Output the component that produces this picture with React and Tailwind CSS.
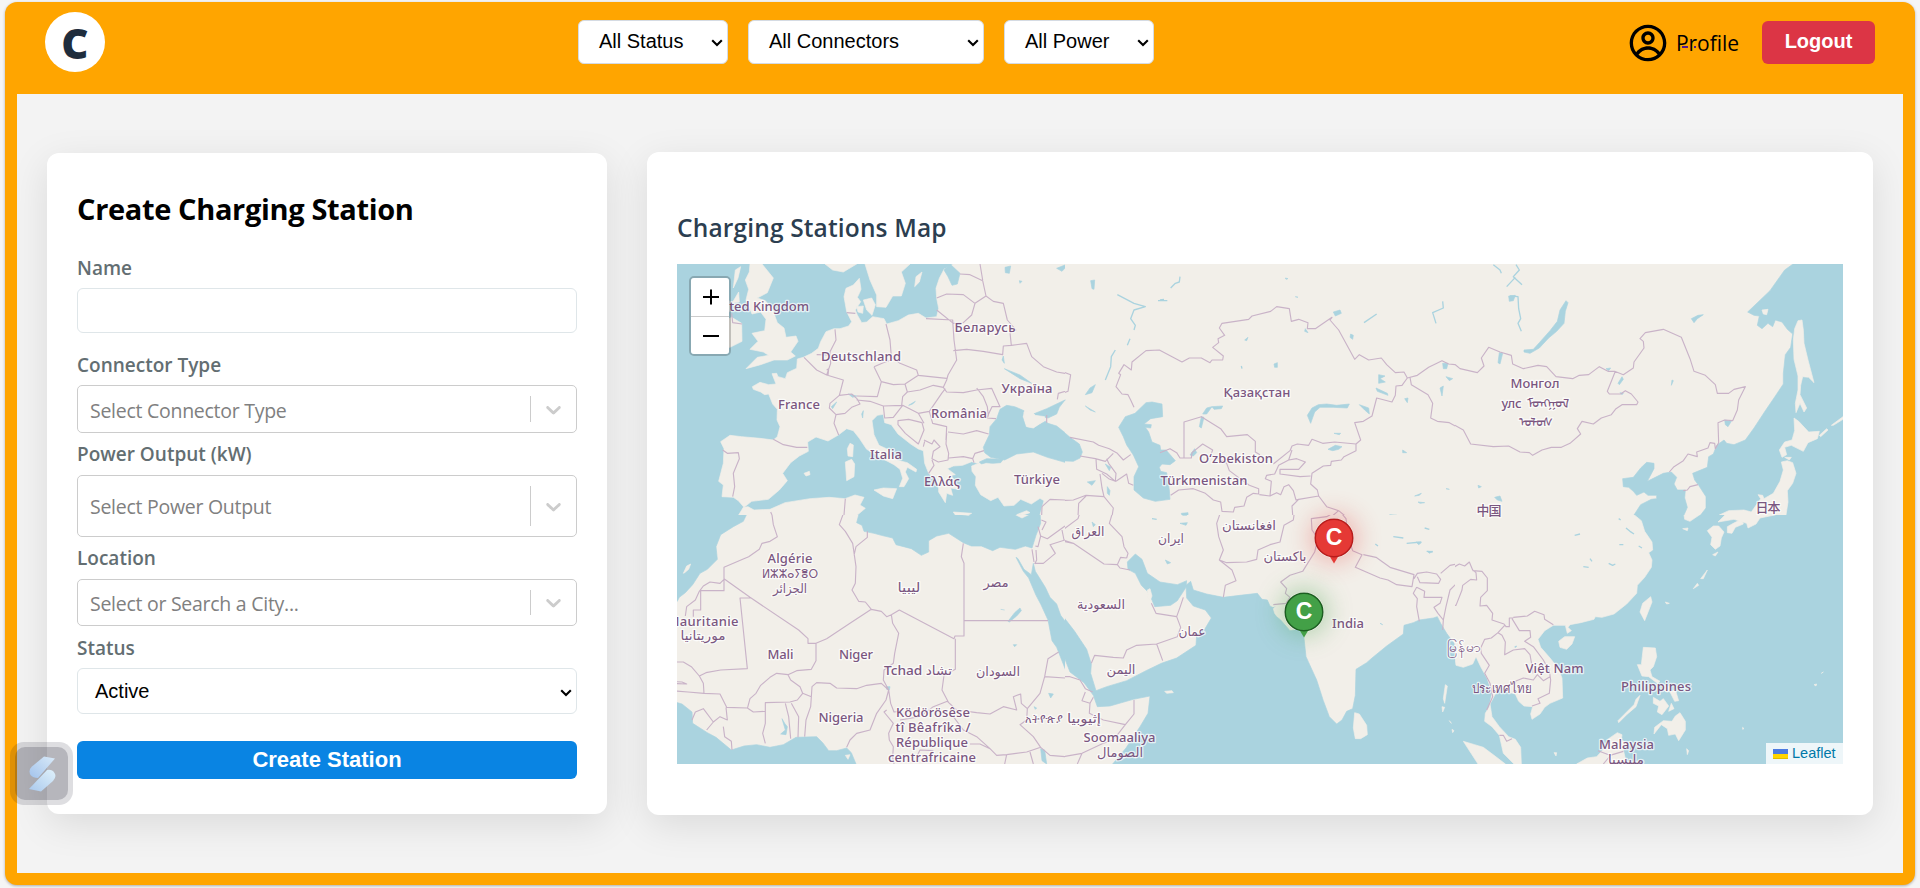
import React from "react";
import { CgProfile } from "react-icons/cg";

function Caret({ className = "" }) {
  return (
    <svg className={"h-[8px] w-[12px] shrink-0 " + className} viewBox="0 0 12 8" fill="none">
      <path d="M1.2 1.3 6 6.1l4.8-4.8" stroke="currentColor" strokeWidth="2.1" />
    </svg>
  );
}

function Filter({ label, width }) {
  return (
    <button
      className={
        "flex h-[44px] items-center justify-between rounded-[6px] border border-[#d5dbe3] bg-white pl-[20px] pr-[4px] font-['Liberation_Sans',sans-serif] text-[20px] text-black " +
        width
      }
    >
      <span className="-mt-[2px]">{label}</span>
      <Caret className="mt-[2px]" />
    </button>
  );
}

function Label({ children, className }) {
  return (
    <div className={"text-[19px] font-semibold leading-[26px] text-[#636e72] " + className}>{children}</div>
  );
}

function Picker({ text, height, spacing }) {
  return (
    <div className={"flex shrink-0 items-stretch rounded-[5px] border border-[#ccc] bg-white pl-[12px] text-[19.5px] text-[#808080] " + height}>
      <span className={"grow self-center pt-[3px] leading-[26px] " + spacing}>{text}</span>
      <span className="my-[10px] w-px bg-[#ccc]" />
      <span className="flex w-[45px] items-center justify-center">
        <svg className="h-[25px] w-[25px]" viewBox="0 0 20 20" fill="#ccc">
          <path d="M4.516 7.548c0.436-0.446 1.043-0.481 1.576 0l3.908 3.747 3.908-3.747c0.533-0.481 1.141-0.446 1.574 0 0.436 0.445 0.408 1.197 0 1.615-0.406 0.418-4.695 4.502-4.695 4.502-0.217 0.223-0.502 0.335-0.787 0.335s-0.57-0.112-0.789-0.335c0 0-4.287-4.084-4.695-4.502s-0.436-1.17 0-1.615z" />
        </svg>
      </span>
    </div>
  );
}

const LAND = "#f2efe9";
const WATER = "#aad3df";
const BORDER = "#c9b3c8";

const tiles = [
  {
    x: 0, y: 0, w: 388, h: 251, vb: "21 12 1164 753", base: WATER,
    land: [
      "M850 12 822 28 808 55 798 85 800 115 806 145 800 170 768 174 745 160 715 165 685 182 650 192 642 176 608 170 590 186 575 188 562 165 556 150 572 125 562 112 568 100 573 88 568 55 550 75 528 85 522 110 530 155 545 185 536 198 510 206 492 206 468 215 452 245 445 265 425 280 400 292 382 297 380 325 352 338 346 356 324 350 320 340 306 341 318 372 296 374 270 367 247 380 250 388 272 396 284 404 296 402 308 432 322 448 321 480 330 500 322 530 310 540 270 535 215 530 180 526 152 545 162 566 160 610 146 664 160 675 156 710 190 712 205 722 222 742 245 724 295 718 328 690 352 662 338 640 362 608 388 588 415 574 413 546 438 531 474 543 505 525 530 506 550 512 568 535 590 568 620 585 645 600 672 614 690 628 698 655 688 680 702 680 716 656 706 636 712 622 738 636 740 628 712 608 680 600 662 572 627 556 612 524 606 482 622 466 640 463 644 488 664 494 684 522 722 552 745 567 760 572 764 610 776 640 792 655 806 676 806 696 826 728 830 700 848 706 842 684 866 688 852 660 842 646 856 644 832 626 850 618 878 616 905 605 922 610 940 606 962 596 905 618 906 634 918 650 916 676 932 704 962 722 984 712 1002 738 1032 736 1052 718 1084 732 1110 715 1122 722 1110 765H1185V12Z",
      "M206 765 220 742 234 740 252 750 300 748 345 728 420 716 478 712 525 716 555 705 582 712 570 735 586 745 562 765Z",
      "M240 12H276L310 54 292 98 262 114 286 122 308 150 322 188 342 204 348 232 378 228 384 244 362 276 376 288 352 300 312 300 272 314 228 326 262 292 296 286 280 276 240 268 264 244 246 220 284 212 288 178 272 156 246 162 228 120 236 88 226 60 238 36Z",
      "M150 190 185 172 215 190 216 244 180 262 150 262Z",
      "M465 12 488 30 520 36 560 12Z",
      "M585 12 600 60 620 105 620 140 648 142 668 108 694 108 706 70 694 36 720 12Z",
      "M734 80 738 50 756 36 748 66Z",
      "M580 120 605 114 616 134 606 166 590 150Z M560 140 580 138 578 160 564 156Z",
      "M540 550 550 555 548 590 534 588 532 566Z M545 598 554 612 552 650 530 662 526 606Z",
      "M612 690 640 684 680 686 668 716 640 708Z M402 640 418 634 420 644 408 648Z M850 756 905 760 890 768 856 765Z M1040 764 1070 752 1080 758 1060 765Z",
      "M196 30 212 20 204 54 190 84Z M186 130 206 96 208 126Z",
    ],
    water: [
      "M840 12 870 40 862 72 846 76 834 50 822 30Z",
      "M990 448 1010 436 1034 440 1062 452 1058 470 1068 500 1090 504 1126 484 1134 490 1160 498 1185 518V607L1132 592 1090 576 1040 582 1004 600 962 592 944 578 940 562 958 524 960 500 980 476Z",
      "M1090 462 1130 446 1185 420 1168 442 1160 462 1134 474 1118 470 1096 468Z",
      "M950 596 1000 598 992 608 968 610 948 608 934 612 928 606Z",
      "M1005 22 1022 18 1018 40 1006 38Z M1000 288 1003 310 996 300Z M1003 326 1050 345 1085 370 1050 356Z M575 462 580 452 578 474Z M716 436 736 424 728 432Z M484 440 500 426 488 446Z M535 402 560 408 548 412Z M1048 62 1056 64 1050 70Z",
      "M1160 25 1185 15 1185 24 1176 34Z",
    ],
    over: ["M1062 456 1082 452 1096 466 1124 470 1122 482 1090 504 1070 500 1062 474Z"],
    lines:
      "M870 42 900 44 938 62 948 108 915 130 880 104 830 102 800 114M930 12 938 60M948 108 970 124 1000 130 1012 180 1038 210 1020 218 1024 256 1000 258 998 284 940 274 890 268 850 272M915 130 905 165 880 188 850 190 800 150M768 176 848 180 852 240 860 300 834 345 830 360 820 382M648 192 660 240 664 290 690 310 740 330 745 346 830 355M612 320 640 308 664 300M612 320 634 365 670 374 705 372 745 346M705 372 712 396 750 390 790 376 820 382 830 396 880 398 920 390 965 385 990 440 966 440 950 474 978 476M920 384 940 410 952 440 955 470M1024 256 1070 250 1085 290 1120 320 1160 336 1196 342 1198 390 1165 400 1162 418M495 208 498 240 480 275 482 310 470 345 440 330 402 292M440 284 480 285M470 345 520 360 508 406 480 430 478 444 498 464 525 460 545 442 570 432 560 415 545 402 508 406M560 408 622 410 634 365M560 420 600 424 640 438 695 436 698 410 712 396M640 438 644 474 670 472 698 436 745 460 778 454 815 400 826 386M684 482 716 478 756 488 762 510 745 552 706 520 684 494ZM745 460 762 490M778 454 788 490 830 500 828 540M762 540 786 552 792 540 810 560 790 574 786 596 805 606 834 600 836 580 828 552 830 520M834 516 880 522 920 512 956 522M836 594 880 590 908 596 915 580 942 572M786 600 792 616 776 640M760 560 764 544M498 464 492 490 506 525M310 538 340 554 380 562 412 562M158 570 172 580 205 578 208 596 190 640 194 680 188 710M185 160 188 188 216 192M530 158 556 160M526 716 522 765M306 765 302 756M1130 465V488M1116 740 1140 718 1185 720M1115 765 1116 740M908 596 912 608M474 346 476 326 470 330",
  },
  {
    x: 388, y: 0, w: 390, h: 251, vb: "15 12 1170 753", base: LAND,
    land: [], over: [],
    water: [
      "M258 428 276 426 306 432 308 470 272 476 252 492 274 494 272 504 256 502 266 516 276 546 300 556 302 570 318 570 332 586 346 602 330 614 306 612 298 622 302 634 320 638 328 690 330 718 286 724 250 714 222 690 222 650 236 620 220 585 200 555 190 530 176 502 196 470 225 460Z",
      "M0 506 30 532 58 552 67 576 60 594 40 604 0 602Z",
      "M752 490 742 466 756 444 775 434 800 432 830 436 868 432 862 444 820 442 780 442 764 456Z",
      "M804 568 826 556 846 560 836 568 818 572Z M390 585 404 566 410 578 400 588Z M418 500 424 470 432 472 424 504Z M428 462 440 444 456 440 440 462Z M456 440 488 438 484 446 462 448Z",
      "M898 434 926 444 928 462 914 450Z M948 384 982 400 984 406 952 394Z M956 344 975 348 960 356 976 366 956 370Z M822 520 842 520 838 524Z M642 312 652 308 652 322 644 322Z M736 206 744 218 734 214Z M1148 310 1164 310 1160 326 1150 326Z M1158 350 1178 356 1168 362Z M1140 384 1150 378 1146 408Z M1034 416 1044 414 1042 428Z M1028 570 1040 578 1028 578Z",
      "M820 156 840 150 844 160 826 168Z M872 222 880 226 878 238 870 232Z M554 240 564 232 560 242Z M82 666 106 662 96 676Z M142 680 150 692 148 706 142 700Z M364 760 384 758 384 766 366 766Z M136 612 152 622 148 632Z M76 404 90 384 106 374 96 398Z M76 438 106 456 90 450Z M0 422 16 420 4 428Z M0 12 8 20 0 32Z M92 62 104 60 102 88 96 86Z",
      "M1064 708 1084 700 1078 706Z M1074 726 1094 728 1080 730Z M1158 686 1168 688Z M984 768 1010 766 990 764Z M676 54 684 56 678 58Z M706 110 714 112Z",
    ],
    rivers:
      "M172 104 222 130 256 140 222 150 212 176 226 196 222 210M210 236 202 256M166 270 154 290 152 320 136 360M294 122 322 122M332 84 346 70 358 66 360 50M912 188 950 162M1148 124 1150 144 1118 158 1128 190M544 318 546 326M300 120 312 118",
    lines:
      "M0 332 32 344 24 394 0 402M222 442 212 420 204 404 186 402 168 380 182 344 176 340 192 314 214 330 216 306 258 272 298 270 366 306 388 294 424 294 450 308 456 300 488 300 490 288 458 262 476 248 474 236 494 226 478 204 486 190 566 178 576 168 632 154 650 140 688 146 694 184 716 178 744 188 742 206 766 206 816 172 810 180 836 210 884 298 898 284 926 300 964 294 980 314 1006 338 1032 336 1042 354 1072 346 1106 322 1146 302 1166 312 1185 314M1042 354 1026 376 1008 378 1006 406 996 426 950 414 936 468 910 484 884 488 902 540 888 552 824 546 788 550 756 538 746 556 712 552 696 558 690 572 640 612M1050 352 1054 374 1104 404 1118 430 1112 474 1132 484 1168 488 1200 506M372 594V486L424 470 482 506 500 530 562 524 586 544V576L600 584M372 594H394L396 578 428 552 458 570 452 586 476 596 500 610 508 632 540 656 568 676 596 686V702L580 700 560 712 552 738 524 742 520 756 486 754 482 726 460 720 436 700 400 686 356 690 332 706M300 578 330 566 350 578 360 594 372 594M888 552V572L852 590 844 600 814 604 812 616 790 618 756 640 752 672 772 690 776 708 716 718 696 738 698 765M752 648 720 650 660 642 660 628 688 628 716 628 736 606 710 596 686 600 696 570M686 600 656 616 644 642 620 646 616 656 634 664 630 708 598 704M630 708 650 698 662 704 672 680 686 674 700 692 708 720 716 718M776 708 800 740 836 752 858 770M836 752 812 772 756 778M30 532 100 546 116 556 148 566 172 580 190 600 212 584M60 588 106 596 136 604 160 580M108 598 110 628 140 642 166 664 168 640 146 610 140 596M168 664 200 642 206 670 220 676M120 642 126 684 132 710 78 706 40 720 0 722M132 710 160 744 156 770M78 708 56 730 54 770M126 640 146 656 166 664",
  },
  {
    x: 778, y: 0, w: 388, h: 251, vb: "15 12 1164 753", base: LAND,
    water: [
      "M1029 12 1004 30 960 92 893 156 912 166 928 168 922 196 936 206 954 190 968 200 976 180 996 186 1012 208 1028 222 1022 262 1006 284 1000 340 1000 372 972 414 946 452 912 504 886 540 852 554 830 550 822 540 800 556 790 582 776 590 772 622 728 640 734 660 746 676 768 710 768 744 752 765H1179V12Z",
      "M590 607 612 610 612 626 592 664 640 640 664 636 680 652 672 672 682 690 706 690 704 714 712 742 702 765H552L572 734 604 718 620 716 620 706 594 706 582 696 560 706 550 694 536 682 520 680 518 656 550 652 572 624Z",
      "M348 122 354 128 346 154 342 190 320 214 296 234 268 264 240 280 222 276 222 270 250 268 268 248 300 212 322 184 330 150Z",
      "M148 278 158 280 150 312 144 308Z M504 370 516 350 520 358 508 374Z M724 176 744 166 760 164 742 176 732 188Z M824 480 844 484 834 500 826 494Z M134 712 150 708 156 724 142 720Z M84 676 94 680 86 684Z M468 326 482 324 476 332Z M176 108 196 106 190 122 178 124Z M510 398 520 400 516 404Z M666 360 670 362 664 376Z",
    ],
    land: [],
    over: [
      "M1044 182 1056 180 1060 210 1062 250 1074 300 1092 368 1076 352 1058 350 1052 376 1050 404 1070 444 1062 456 1050 430 1038 458 1036 430 1044 390 1044 348 1032 298 1030 240 1034 206Z",
      "M1032 474 1046 484 1076 516 1108 514 1102 536 1074 548 1060 574 1024 556 1004 562 1010 584 996 592 988 570 1004 546 1026 540 1034 512Z M1108 526 1130 506 1134 510 1112 530ZM1144 496 1179 470V478L1150 496Z",
      "M994 606 1012 602 1028 608 1038 640 1028 670 1012 692 1014 726 1008 765H808L836 752 882 750 904 756 932 716 924 704 938 706 942 716 970 700 990 664 1000 630Z",
      "M1004 592 1024 592 1018 600Z M936 150 954 148 950 164 940 162Z",
    ],
    rivers: "M130 14 150 30 154 40M198 14 208 30 190 50 216 74M170 80 196 52M180 108 204 110 206 146 212 176 204 190 214 214",
    lines:
      "M0 314 16 314 30 326 82 338 102 318 94 294 116 262 150 276 184 286 188 312 220 326 264 316 290 320 318 350 368 356 388 346 416 344 448 320 474 334 494 334 520 344 550 324 552 306 582 264 580 244 570 236 586 218 640 208 694 232 720 296 732 334 766 346 796 374 802 400 836 400 852 388 886 380 866 420 862 450 848 482 824 480 804 488 806 548 796 566 794 550 780 548 774 564 740 576 742 590 714 582 700 602 672 620 658 636M496 334 472 394 478 402 512 402 526 392 544 402 564 426 560 434 516 434 498 446 484 464 454 474 430 492 396 484 382 506 392 522 360 550 334 562 304 562 276 570 248 586 238 578 210 576 176 558 130 560 62 552 40 510 0 488M700 692 712 690 720 680 744 674",
  },
  {
    x: 0, y: 251, w: 388, h: 249, vb: "21 15 1164 747", base: LAND,
    water: [
      "M0 0H236L220 34 190 50 152 74 138 110 142 148 112 178 90 190 68 224 46 248 28 262 21 275H0Z",
      "M236 0 240 10 290 12 305 0Z",
      "M570 0 560 38 576 46 582 64 612 70 634 76 668 84 678 104 724 116 754 136 776 126 776 92 800 78 836 70 880 98 904 108 934 108 968 122 990 112 1036 118 1066 108 1086 114 1098 76 1112 40 1110 0Z",
      "M1038 142 1044 146 1062 178 1084 194 1090 160 1096 184 1126 232 1140 262 1160 282 1172 316 1190 340V488L1160 412 1146 392 1134 330 1112 282 1098 256 1076 204 1060 184Z",
      "M0 572 36 582 66 606 68 640 112 668 138 682 184 720 222 708 260 704 300 712 340 704 378 682 440 680 458 698 476 722 500 722 530 714 544 728 558 762H0Z",
      "M336 626 344 640 352 650 348 674 332 672 346 660ZM1112 716 1124 720 1130 762 1116 752ZM1136 550 1150 552 1142 564ZM1014 334 1034 308 1050 294 1054 302 1040 318 1018 336ZM992 298 1004 300M1030 404 1040 404 1034 410ZM650 530 660 530 658 540 650 538ZM1092 590 1100 594 1096 598Z",
    ],
    land: [],
    over: ["M40 190 50 168 62 162 56 178 44 188Z M850 6 880 6 908 8 896 16 860 12Z M1036 14 1060 8 1080 12 1056 24Z M526 736 540 734 534 748Z"],
    lines:
      "M304 0 310 44 322 80 300 94 276 100 268 118 236 140 218 148 162 172V242H92V300H70V320M162 208 150 220 120 216 100 228 88 244 76 270 50 290 46 318M162 206 240 262 386 360 414 386V400H438L470 386 540 340 604 298 586 276 566 274 546 240 556 220 558 170 548 100 526 64 508 44 524 0M592 64 592 82 558 110 552 136M604 298 634 304 650 320 664 314 688 300 852 386 855 378H882V160L874 140 880 100M882 332H1134M856 386V478L822 496 816 540 836 578M664 314 668 340 686 370 674 430 670 460 642 480 640 510 656 540M438 400V452L424 478 380 482 354 494 320 490 300 502 272 526 258 550 240 566 232 596 M244 264H210L232 476 152 480 108 488 88 498 64 470 40 456 0 456M88 498 100 520 102 550 54 546 0 542M0 520 50 522 36 516 0 514M102 550 150 552 170 592 232 594 250 606 286 604M286 700 278 670 286 640 286 578 360 576 382 570 398 550 390 530 362 510 354 494M398 550 424 560 426 530 440 518 480 520 500 534 560 536 590 526 634 520 656 540 648 570 620 610 600 660 560 670 540 690 530 712M424 560 422 590 408 630 404 680M364 580 386 620 384 682M346 580 356 620 362 686M168 592 172 630 150 620 130 636 100 596 76 606 66 630M130 636 110 660M160 650 164 680 184 694 186 720M656 540 662 580 672 606 690 604M650 600 642 606 670 640 656 670 658 690 670 710 668 740 672 762M690 630 750 620 790 590 832 574 860 600 920 608 960 612 1000 590 1040 600 1030 560 1052 552 1054 580 1072 596 1070 630 1050 644 1090 680 1112 712 1070 726 1010 734 980 736 960 716 930 702 900 702M850 620 880 660 920 680 960 716M1072 596 1110 550 1124 500 1134 446 1166 426M1124 500 1185 504M1112 712 1140 736 1185 740M1010 734 1004 762M1080 726 1090 762M1098 120 1100 150 1094 162M1086 118 1092 156M1104 50 1112 78 1104 110 1096 108M1112 78 1132 86 1185 48M1114 30 1128 36 1116 60M1094 160 1120 160 1156 130 1140 104 1185 90M1176 60 1182 90M740 740 750 720 790 722",
  },
  {
    x: 388, y: 251, w: 390, h: 249, vb: "15 15 1170 747", base: LAND,
    water: [
      "M378 226 392 214 400 240 440 252 490 262 540 256 592 250 606 268 622 270 630 288 652 300 650 320 662 330 690 362 716 358 730 366 738 440 770 510 790 572 808 620 830 642 846 630 860 604 878 596 886 556 888 478 920 458 936 444 980 408 1030 372 1032 346 1060 338 1078 330 1120 324 1132 320 1142 340 1160 370 1182 400 1188 460 1200 470V762H158L198 714 240 650 264 610 270 558 220 568 150 588 112 590 100 556 72 518 30 486 0 410V290L10 320 44 364 80 418 94 462 92 490 108 542 140 530 200 512 258 482 304 460 350 444 408 406 410 374 434 358 454 324 436 300 400 288 380 264Z",
      "M202 156 226 132 246 148 262 190 300 216 352 224 380 212 378 232 352 272 332 286 284 290 276 270 262 244 244 226 226 190 204 178Z",
      "M636 294 670 282 678 290 660 300ZM96 36 106 44 100 50ZM316 150 332 158 322 162ZM366 8 384 10 380 16 368 16ZM360 40 382 38 378 46ZM1068 96 1084 98 1076 104ZM1102 124 1118 124 1108 130ZM960 340 968 344Z",
    ],
    land: [],
    over: [
      "M884 608 898 612 920 646 922 674 902 686 886 686 880 654Z M262 240 270 236 276 258 270 272 264 262Z M314 544 336 542 340 548 320 550Z M1156 524 1162 528 1154 580 1150 566Z M1146 590 1154 592 1148 606Z M1168 632 1174 640ZM1176 658 1182 662 1178 668Z",
      "M644 310 640 296 654 282 676 282 682 330 650 318Z",
    ],
    rivers: "M946 102 954 108M1000 80 1030 84M1040 100 1084 96M1094 54 1108 58M1100 124 1118 126M276 26 290 28M360 12 384 12",
    lines:
      "M62 0 54 26 0 66 10 90 40 100 132 162 172 164 182 142 200 144M172 164 180 174 210 180M160 0 148 40 186 80 192 110 204 130 200 144M0 92 40 100M484 0 470 40 476 80 490 120 478 150 516 180 528 212 496 226 490 262M478 150 500 158 560 156 590 148 594 120 630 104 660 96 672 46 700 30 704 0M836 0 800 20 754 26 756 60 774 86 764 126 728 184 690 196 662 216 680 236 676 250 690 262 678 280 640 284M836 0 858 26 864 80 878 122 906 134 886 172 960 204 984 210 1010 224 1056 230 1062 194 990 172 948 142 910 134M1062 206 1072 190 1100 186 1130 192 1142 208 1136 220 1080 218 1072 200M1070 232 1060 250 1072 266 1070 290 1078 334M1070 232 1094 244 1092 262 1146 262 1140 280 1122 292 1134 310 1150 330 1148 360M1142 190 1170 166 1200 160M1200 210 1170 240 1158 290 1150 330M274 280 288 310 350 320 360 292 370 262M350 320 362 352 352 380 290 402 308 452M290 402 230 406 200 420 190 444 160 442 104 436 94 460M0 500 30 500 60 510 76 536 98 546M76 546 66 572 90 580 88 610 130 630 196 644 222 612V570M196 644 160 690 130 700 66 730 0 742M66 730 52 762M90 580 100 562",
  },
  {
    x: 778, y: 251, w: 388, h: 249, vb: "15 15 1164 747", base: WATER,
    water: [],
    land: [
      "M0 0H556L552 14 574 32 584 64 606 96 608 120 596 128 606 150 604 172 584 202 562 226 560 250 530 282 492 312 456 322 436 320 432 328 392 338 360 344 354 352 364 362 352 370 346 346 310 346 284 362 264 388 272 412 300 444 324 474 336 504 338 564 300 580 284 592 270 612 246 628 242 612 248 590 222 588 206 574 196 552 172 546 150 528 134 556 120 582 126 620 148 650 176 680 196 688 212 712 214 762H192L160 730 148 676 126 650 104 634 106 610 118 590 126 550 112 506 92 470 78 440 68 462 40 472 18 466 12 420 0 400Z",
      "M40 694 74 704 100 712 140 742 166 762H84Z",
      "M380 762 412 744 440 740 466 712 476 686 502 668 516 674 514 690 534 700 520 720 530 762Z",
      "M326 394 344 380 374 380 366 402 350 418 330 412Z M602 260 606 276 584 332 570 306 578 280Z",
      "M580 412 616 414 620 440 610 470 600 480 606 500 630 514 622 520 596 500 576 498 562 464 574 464Z",
      "M690 608 706 634 706 660 686 692 676 672 656 676 652 656 634 644 612 672 614 652 640 632 666 634 676 618Z",
      "M610 562 630 574 640 566 656 588 636 614 622 606 626 588 610 580Z M636 524 658 530 654 546 640 540Z M660 546 676 540 686 572 674 574Z M664 580 672 596 656 604Z",
      "M570 556 558 590 530 614 506 638 504 632 530 606 552 584 558 568Z M700 0H770L720 34 704 28Z M698 56 714 54 712 62Z",
      "M772 62 790 48 806 48 822 66 814 84 810 108 796 118 782 104 786 82Z M832 50 850 40 874 28 880 42 856 52 846 70 832 68Z M804 36 826 14 840 0H1010L970 16 930 24 918 42 894 54 890 40 852 28Z",
      "M788 134 804 126 796 138Z M730 236 742 220 746 226ZM752 206 772 180 760 206Z M646 276 658 280 650 282Z M312 728 320 728 318 738Z M4 656 12 664 8 670Z M878 652 882 656 878 658Z M1092 524 1100 522 1098 528Z M1114 490 1120 486ZM710 716 716 722 712 734Z",
    ],
    over: [],
    rivers: "M506 26 512 30M528 54 540 64 552 72M508 104 520 104M566 108 576 114M476 160 488 166 496 162M400 170 416 172M420 146 426 154M374 76 390 72M194 412 200 408",
    lines:
      "M0 178 28 162 44 168 58 156 68 180 78 188 80 210 62 208 38 226 36 240 18 286 0 288M68 182 96 184 112 204V242L92 262 90 288 110 286 128 310 126 330 162 342 168 350 178 350 178 324 190 324M190 322 232 318 254 304 282 314 284 328 310 344M186 326 208 362 240 362 242 382 224 394 250 410 280 450 298 482 302 510 298 550 264 566 270 580 246 588M164 346 144 368 156 376 166 396 164 434 190 420 224 416 240 434 250 490M144 368 124 384 104 388 92 414 94 430 118 466 104 490 120 520 128 560 110 600M196 514 220 504 250 510 262 494 280 512 300 500M196 514 190 546M148 676 160 676 170 694 186 686M444 722 480 736 520 724M460 762 480 738",
  },
];

const labels = [
  ["United Kingdom", 758.5, 311, 101],
  ["Беларусь", 985, 332, 61], ["Deutschland", 861, 361, 80], ["Україна", 1027, 393, 51],
  ["France", 799, 409, 42], ["România", 959, 418, 56], ["Italia", 886, 459, 32],
  ["Ελλάς", 942, 486, 36], ["Türkiye", 1037, 484, 46], ["Қазақстан", 1257, 397, 67],
  ["O‘zbekiston", 1236, 463, 74], ["Türkmenistan", 1204, 485, 87],
  ["Монгол", 1535, 388, 49], ["улс", 1511.5, 408, 20], ["ᠮᠣᠩᠭᠣᠯ", 1548, 408, 42], ["ᠤᠯᠤᠰ", 1535.5, 427, 34],
  ["中国", 1489, 515, 25], ["日本", 1768, 512, 25],
  ["Algérie", 790, 563, 45], ["ⵍⵣⵣⴰⵢⴻⵔ", 790, 578, 56], ["الجزائر", 790, 593, 34],
  ["ليبيا", 909, 592, 23], ["مصر", 996, 587, 25],
  ["Mauritanie", 703, 626, 71], ["موريتانيا", 703, 640, 45],
  ["Mali", 780.5, 659, 26], ["Niger", 856, 659, 34], ["Tchad تشاد", 918, 675, 68],
  ["السودان", 998, 676, 44], ["Nigeria", 841, 722, 45],
  ["Ködörösêse", 933, 717, 74], ["tî Bêafrîka /", 933, 732, 75], ["République", 932, 747, 72], ["centrafricaine", 932, 761.5, 88],
  ["العراق", 1088, 536, 33], ["ايران", 1171, 543, 26], ["افغانستان", 1249, 530, 54], ["باكستان", 1285, 561, 43],
  ["السعودية", 1101, 609, 48], ["عمان", 1192, 636, 27], ["اليمن", 1121, 674, 29],
  ["አትዮጵያ", 1044, 723, 38], ["إثيوبيا", 1084, 723, 34],
  ["Soomaaliya", 1119.5, 742, 72], ["الصومال", 1120, 757, 46], ["India", 1348, 628, 32],
  ["မြန်မာ", 1464, 652, 34], ["Việt Nam", 1554.5, 673, 58], ["ประเทศไทย", 1502, 693, 60],
  ["Philippines", 1656, 691, 70], ["Malaysia", 1626.5, 749, 55], ["مليسيا", 1626, 764, 36],
];

function WorldMap() {
  return (
    <svg className="block h-[500px] w-[1166px]" viewBox="0 0 1166 500">
      {tiles.map((t, i) => (
        <svg key={i} x={t.x} y={t.y} width={t.w} height={t.h} viewBox={t.vb} overflow="hidden">
          <rect x="0" y="0" width="1300" height="800" fill={t.base} />
          <g strokeLinejoin="round" strokeWidth="2">
            <path d={t.land.join("")} fill={LAND} stroke={LAND} />
            <path d={t.water.join("")} fill={WATER} stroke={WATER} />
            <path d={t.over.join("")} fill={LAND} stroke={LAND} />
          </g>
          {t.rivers && <path d={t.rivers} fill="none" stroke={WATER} strokeWidth="4" strokeLinejoin="round" />}
          <path d={t.lines} fill="none" stroke={BORDER} strokeWidth="3.4" strokeLinejoin="round" />
        </svg>
      ))}
      <g
        fontFamily="'Noto Sans','Noto Sans CJK SC','DejaVu Sans',sans-serif"
        fontSize="13"
        fontWeight="500"
        fill="#7a5680"
        stroke="#fff"
        strokeOpacity="0.7"
        strokeWidth="2.6"
        strokeLinejoin="round"
        style={{ paintOrder: "stroke" }}
      >
        {labels.map(([text, x, y, w], i) => (
          <text
            key={i}
            x={x - 677}
            y={y - 264}
            textAnchor="middle"
            textLength={w}
            lengthAdjust={/[\u0600-\u06ff\u0e00-\u139f\u1800-\u18af\u2d30-\u2d7f]/.test(text) ? "spacingAndGlyphs" : "spacing"}
          >
            {text}
          </text>
        ))}
      </g>
    </svg>
  );
}

function Pin({ place, fill, edge, glow }) {
  return (
    <div className={"absolute h-[46px] w-[40px] " + place}>
      <div className={"absolute left-0 top-0 h-[40px] w-[40px] rounded-full " + glow} />
      <svg className="absolute left-0 top-0 h-[46px] w-[40px]" viewBox="0 0 40 46">
        <path d="M15.500 38h9L20 45.500Z" fill={fill} />
        <circle cx="20" cy="20" r="18.800" fill={fill} stroke={edge} strokeWidth="1.500" />
      </svg>
      <span className="absolute left-0 top-0 w-[40px] text-center font-['Liberation_Sans',sans-serif] text-[23px] font-bold leading-[39px] text-white">
        C
      </span>
    </div>
  );
}

export default function App() {
  return (
    <div className="relative h-[888px] w-[1920px] overflow-hidden bg-[#f5f5f5] pl-[5px] pt-[2px] font-['Open_Sans','Noto_Sans',sans-serif]">
      <div className="flex h-[883px] w-[1910px] flex-col rounded-[12px] bg-[#ffa500] pb-[12px] pl-[12px] pr-[12px] shadow-[0_1px_3px_rgba(0,0,0,0.3)]">
        <header className="grid h-[92px] shrink-0 grid-cols-[533px_1fr_auto] items-start pl-[28px] pr-[28px] pt-[10px]">
          <div className="flex h-[60px] w-[60px] justify-center rounded-full bg-white text-[42px] font-extrabold leading-[62px] text-[#1f2d3d]">
            C
          </div>
          <div className="flex gap-[20px] pt-[8px]">
            <Filter label="All Status" width="w-[150px]" />
            <Filter label="All Connectors" width="w-[236px]" />
            <Filter label="All Power" width="w-[150px]" />
          </div>
          <div className="flex items-center pt-[9px]">
            <CgProfile className="h-[40px] w-[40px] text-black" />
            <span className="relative ml-[8px] w-[65px] pt-[1px] text-[21px] font-medium leading-[28px] tracking-[-0.05px] text-black">
              Profile
              <span className="absolute left-[6px] top-[18px] h-[2px] w-[6px] bg-[#551a8b]" />
              <span className="absolute left-[18px] top-[18px] h-[2px] w-[2px] bg-[#551a8b]" />
            </span>
            <button className="ml-[21px] h-[43px] w-[113px] rounded-[6px] bg-[#dc3545] pb-[3px] font-['Liberation_Sans',sans-serif] text-[20px] font-bold leading-[38px] text-white">
              Logout
            </button>
          </div>
        </header>

        <main className="flex h-[779px] items-start overflow-hidden bg-[#f3f3f3] pl-[30px]">
          <section className="mt-[59px] flex h-[661px] w-[560px] shrink-0 flex-col rounded-[12px] bg-white px-[30px] shadow-[0_10px_38px_rgba(0,0,0,0.1)]">
            <h1 className="mt-[36px] whitespace-nowrap text-[29px] font-bold leading-[40px] tracking-[-0.35px] text-black">
              Create Charging Station
            </h1>
            <Label className="mt-[26px]">Name</Label>
            <div className="mt-[7px] h-[45px] shrink-0 rounded-[6px] border border-[#dfe6e9] bg-white" />
            <Label className="mt-[19px]">Connector Type</Label>
            <div className="mt-[7px]">
              <Picker text="Select Connector Type" height="h-[48px]" spacing="tracking-[-0.27px]" />
            </div>
            <Label className="mt-[8px]">Power Output (kW)</Label>
            <div className="mt-[8px]">
              <Picker text="Select Power Output" height="h-[62px]" spacing="-mt-px tracking-[-0.27px]" />
            </div>
            <Label className="mt-[8px]">Location</Label>
            <div className="mt-[8px]">
              <Picker text="Select or Search a City..." height="h-[47px]" spacing="tracking-[-0.27px]" />
            </div>
            <Label className="mt-[9px]">Status</Label>
            <div className="mt-[7px] flex h-[46px] shrink-0 items-center justify-between rounded-[6px] border border-[#dfe6e9] bg-white pl-[17px] pr-[4px] font-['Liberation_Sans',sans-serif] text-[20px] text-black">
              <span>Active</span>
              <Caret className="mt-[3px]" />
            </div>
            <button className="mt-[27px] h-[38px] shrink-0 rounded-[6px] bg-[#0984e3] font-['Liberation_Sans',sans-serif] text-[22px] font-bold leading-[36px] text-white">
              Create Station
            </button>
          </section>

          <section className="ml-[40px] mt-[58px] h-[663px] w-[1226px] shrink-0 rounded-[12px] bg-white px-[30px] shadow-[0_10px_38px_rgba(0,0,0,0.1)]">
            <h2 className="pt-[59px] text-[24.500px] font-semibold leading-[34px] tracking-[0.15px] text-[#2c3e50]">
              Charging Stations Map
            </h2>
            <div className="relative mt-[19px] h-[500px] w-[1166px] overflow-hidden">
              <WorldMap />
              <Pin
                place="left-[637px] top-[254px]"
                fill="#e53935"
                edge="#b71c1c"
                glow="shadow-[0_0_24px_4px_rgba(229,57,53,0.32)]"
              />
              <Pin
                place="left-[607px] top-[328px]"
                fill="#43a047"
                edge="#1b5e20"
                glow="shadow-[0_0_24px_4px_rgba(67,160,71,0.36)]"
              />
              <div className="absolute left-[12px] top-[12px] flex h-[80px] w-[42px] flex-col rounded-[5px] border-2 border-[#00000033] bg-clip-padding">
                <span className="flex h-[39px] items-center justify-center rounded-t-[3px] border-b border-[#ccc] bg-white pl-[2px]">
                  <svg className="h-[16px] w-[16px]" viewBox="0 0 16 16">
                    <path d="M0 8h16M8 .500v15" stroke="#000" strokeWidth="2" />
                  </svg>
                </span>
                <span className="flex h-[37px] items-center justify-center rounded-b-[3px] bg-white pl-[2px]">
                  <svg className="h-[16px] w-[16px]" viewBox="0 0 16 16">
                    <path d="M0 8h16" stroke="#000" strokeWidth="2" />
                  </svg>
                </span>
              </div>
              <div className="absolute bottom-0 right-0 flex h-[21px] w-[77px] items-center bg-white/80 pl-[7px] font-['Liberation_Sans',sans-serif] text-[14.500px] text-[#0078a8]">
                <svg className="mr-[4px] h-[10px] w-[15px] shrink-0" viewBox="0 0 15 10">
                  <path d="M0 0h15v5H0z" fill="#4c7be1" />
                  <path d="M0 5h15v4H0z" fill="#ffd500" />
                  <path d="M0 9h15v1H0z" fill="#e0bc00" />
                </svg>
                Leaflet
              </div>
            </div>
          </section>
        </main>
      </div>

      <div className="absolute left-[10px] top-[742px] h-[63px] w-[63px] rounded-[14px] bg-[#14142824] p-[5px]">
        <div className="flex h-[53px] w-[53px] items-center justify-center rounded-[10px] bg-[#28283c38]">
          <svg className="h-[36px] w-[28px]" viewBox="0 0 28 36">
            <defs>
              <linearGradient id="boltA" x1="0" y1="1" x2="1" y2="0">
                <stop offset="0" stopColor="#a3c3ec" />
                <stop offset="1" stopColor="#d9eaf8" />
              </linearGradient>
              <linearGradient id="boltB" x1="0" y1="1" x2="1" y2="0">
                <stop offset="0" stopColor="#a9c8ec" />
                <stop offset="1" stopColor="#dff1fb" />
              </linearGradient>
            </defs>
            <path d="M16 .500 27 2.500 10 22Q5 22 2.500 19 0 14 4 10.500Z" fill="url(#boltA)" />
            <path d="M19 14Q24 13 26.500 17 29 21 25 25L13 35.500 1 33Z" fill="url(#boltB)" />
          </svg>
        </div>
      </div>
    </div>
  );
}
